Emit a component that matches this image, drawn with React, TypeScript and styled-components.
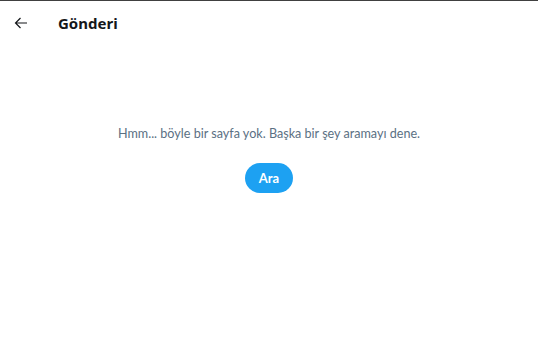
import React from "react";
import styled, { createGlobalStyle } from "styled-components";

const Global = createGlobalStyle`
  html, body { margin: 0; padding: 0; background: #fff; }
  body { font-family: "Lato", "Noto Sans", sans-serif; border-top: 1px solid #404040; }
`;

const Page = styled.div`
  display: flex;
  flex-direction: column;
  width: 538px;
  height: 345px;
`;

const Header = styled.header`
  display: flex;
  align-items: center;
  height: 44px;
  padding: 0 0 0 14px;
  gap: 30px;
`;

const BackButton = styled.button`
  display: flex;
  align-items: center;
  justify-content: center;
  width: 14px;
  height: 14px;
  padding: 0;
  border: none;
  background: none;
  color: #14171a;
`;

const Title = styled.h1`
  margin: 0;
  font-family: "Noto Sans", sans-serif;
  font-size: 15px;
  font-weight: 700;
  color: #14171a;
`;

const Empty = styled.section`
  display: flex;
  flex-direction: column;
  align-items: center;
  padding-top: 80px;
  gap: 21px;
`;

const Message = styled.p`
  margin: 0;
  font-size: 12.6px;
  color: #5b7083;
  line-height: 17px;
`;

const SearchButton = styled.button`
  height: 30px;
  padding: 0 14px;
  border: none;
  border-radius: 999px;
  background: #1da1f2;
  color: #fff;
  font-family: inherit;
  font-size: 13px;
  font-weight: 700;
`;

export default function App() {
  return (
    <>
      <Global />
      <Page>
        <Header>
          <BackButton aria-label="Geri">
            <svg width="14" height="12" viewBox="0 0 14 12" fill="none" stroke="currentColor" strokeWidth="1.2">
              <path d="M13 6H1.5M6.5 1L1.5 6l5 5" />
            </svg>
          </BackButton>
          <Title>Gönderi</Title>
        </Header>
        <Empty>
          <Message>Hmm... böyle bir sayfa yok. Başka bir şey aramayı dene.</Message>
          <SearchButton>Ara</SearchButton>
        </Empty>
      </Page>
    </>
  );
}
